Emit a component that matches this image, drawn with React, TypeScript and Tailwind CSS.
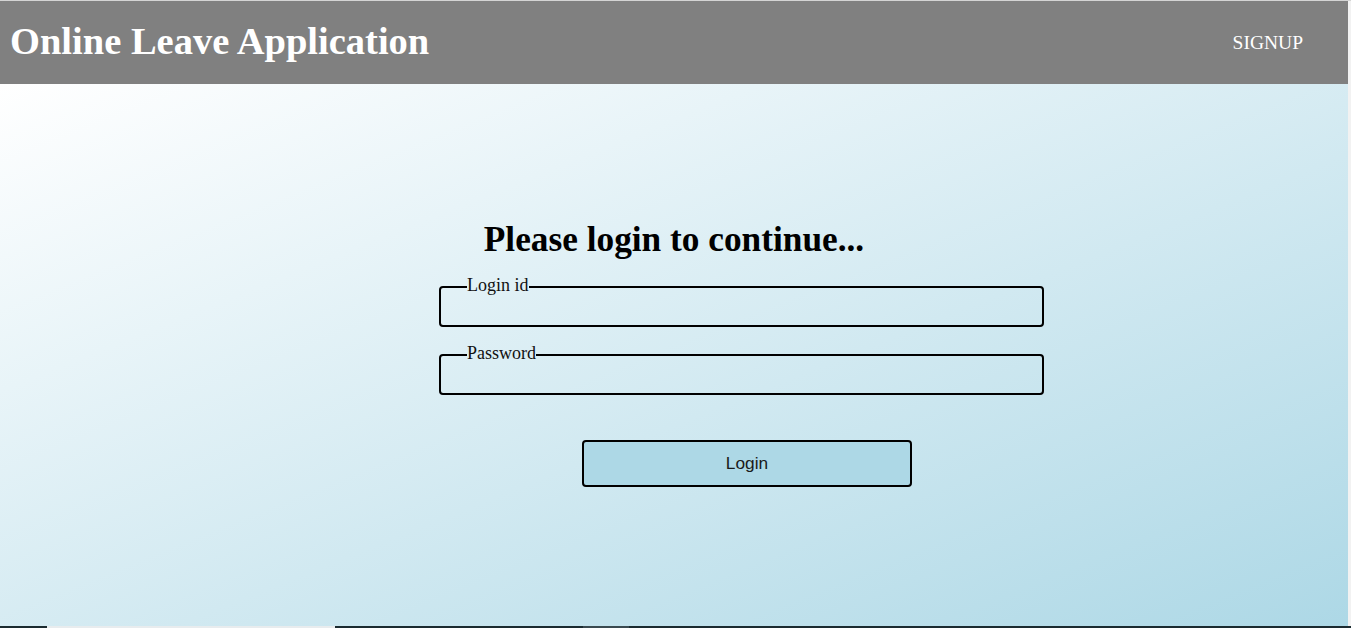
const serif = { fontFamily: '"Liberation Serif", "Times New Roman", serif' };

const Field = ({ label, type }: { label: string; type: string }) => {
    return (
        <fieldset className="border-2 border-black rounded-[4px] px-[26px] w-[605px]">
            <legend className="text-[18px] leading-[20px] text-[#111]" style={serif}>
                <span className="relative -top-[2px]">{label}</span>
            </legend>
            <input type={type} className="w-full h-[28px] bg-transparent outline-none" />
        </fieldset>
    );
};

const App = () => {
    return (
        <div className="w-[1351px] h-[628px] flex flex-col overflow-hidden bg-[#f2f2f2]">
            <div className="h-[1px] bg-[#d4d4d4]" />
            <div className="flex flex-1">
                <div className="w-[1348px] flex flex-col">
                    {/* top bar */}
                    <header className="h-[83px] bg-[#808080] flex items-center justify-between pl-[10px] pr-[45px] pb-[3px] text-white" style={serif}>
                        <h1 className="text-[38.5px] font-bold leading-none">Online Leave Application</h1>
                        <a href="#" className="text-[19.5px] mt-[4px]">SIGNUP</a>
                    </header>
                    {/* login area */}
                    <main className="flex-1 bg-linear-to-br from-white to-[#add8e6] pt-[136px]">
                        <h2 className="text-[35.3px] font-bold leading-[40px] text-center text-black" style={serif}>Please login to continue...</h2>
                        <form className="ml-[439px] mt-[17px] flex flex-col gap-[18px]">
                            <Field label="Login id" type="text" />
                            <Field label="Password" type="password" />
                            <button type="button" className="ml-[143px] mt-[27px] w-[330px] h-[47px] bg-[#add8e6] border-2 border-black rounded-[4px] text-[17.3px] text-[#1a1a1a]" style={{ fontFamily: '"Liberation Sans", Arial, sans-serif' }}>Login</button>
                        </form>
                    </main>
                </div>
                <div className="flex-1" />
            </div>
            {/* bottom strip */}
            <div className="h-[2px] flex bg-[#1b2b30]">
                <div className="w-[47px]" />
                <div className="w-[288px] bg-[#e8ecee]" />
                <div className="w-[248px]" />
                <div className="w-[46px] bg-[#3a4a50]" />
            </div>
        </div>
    );
};

export default App;
